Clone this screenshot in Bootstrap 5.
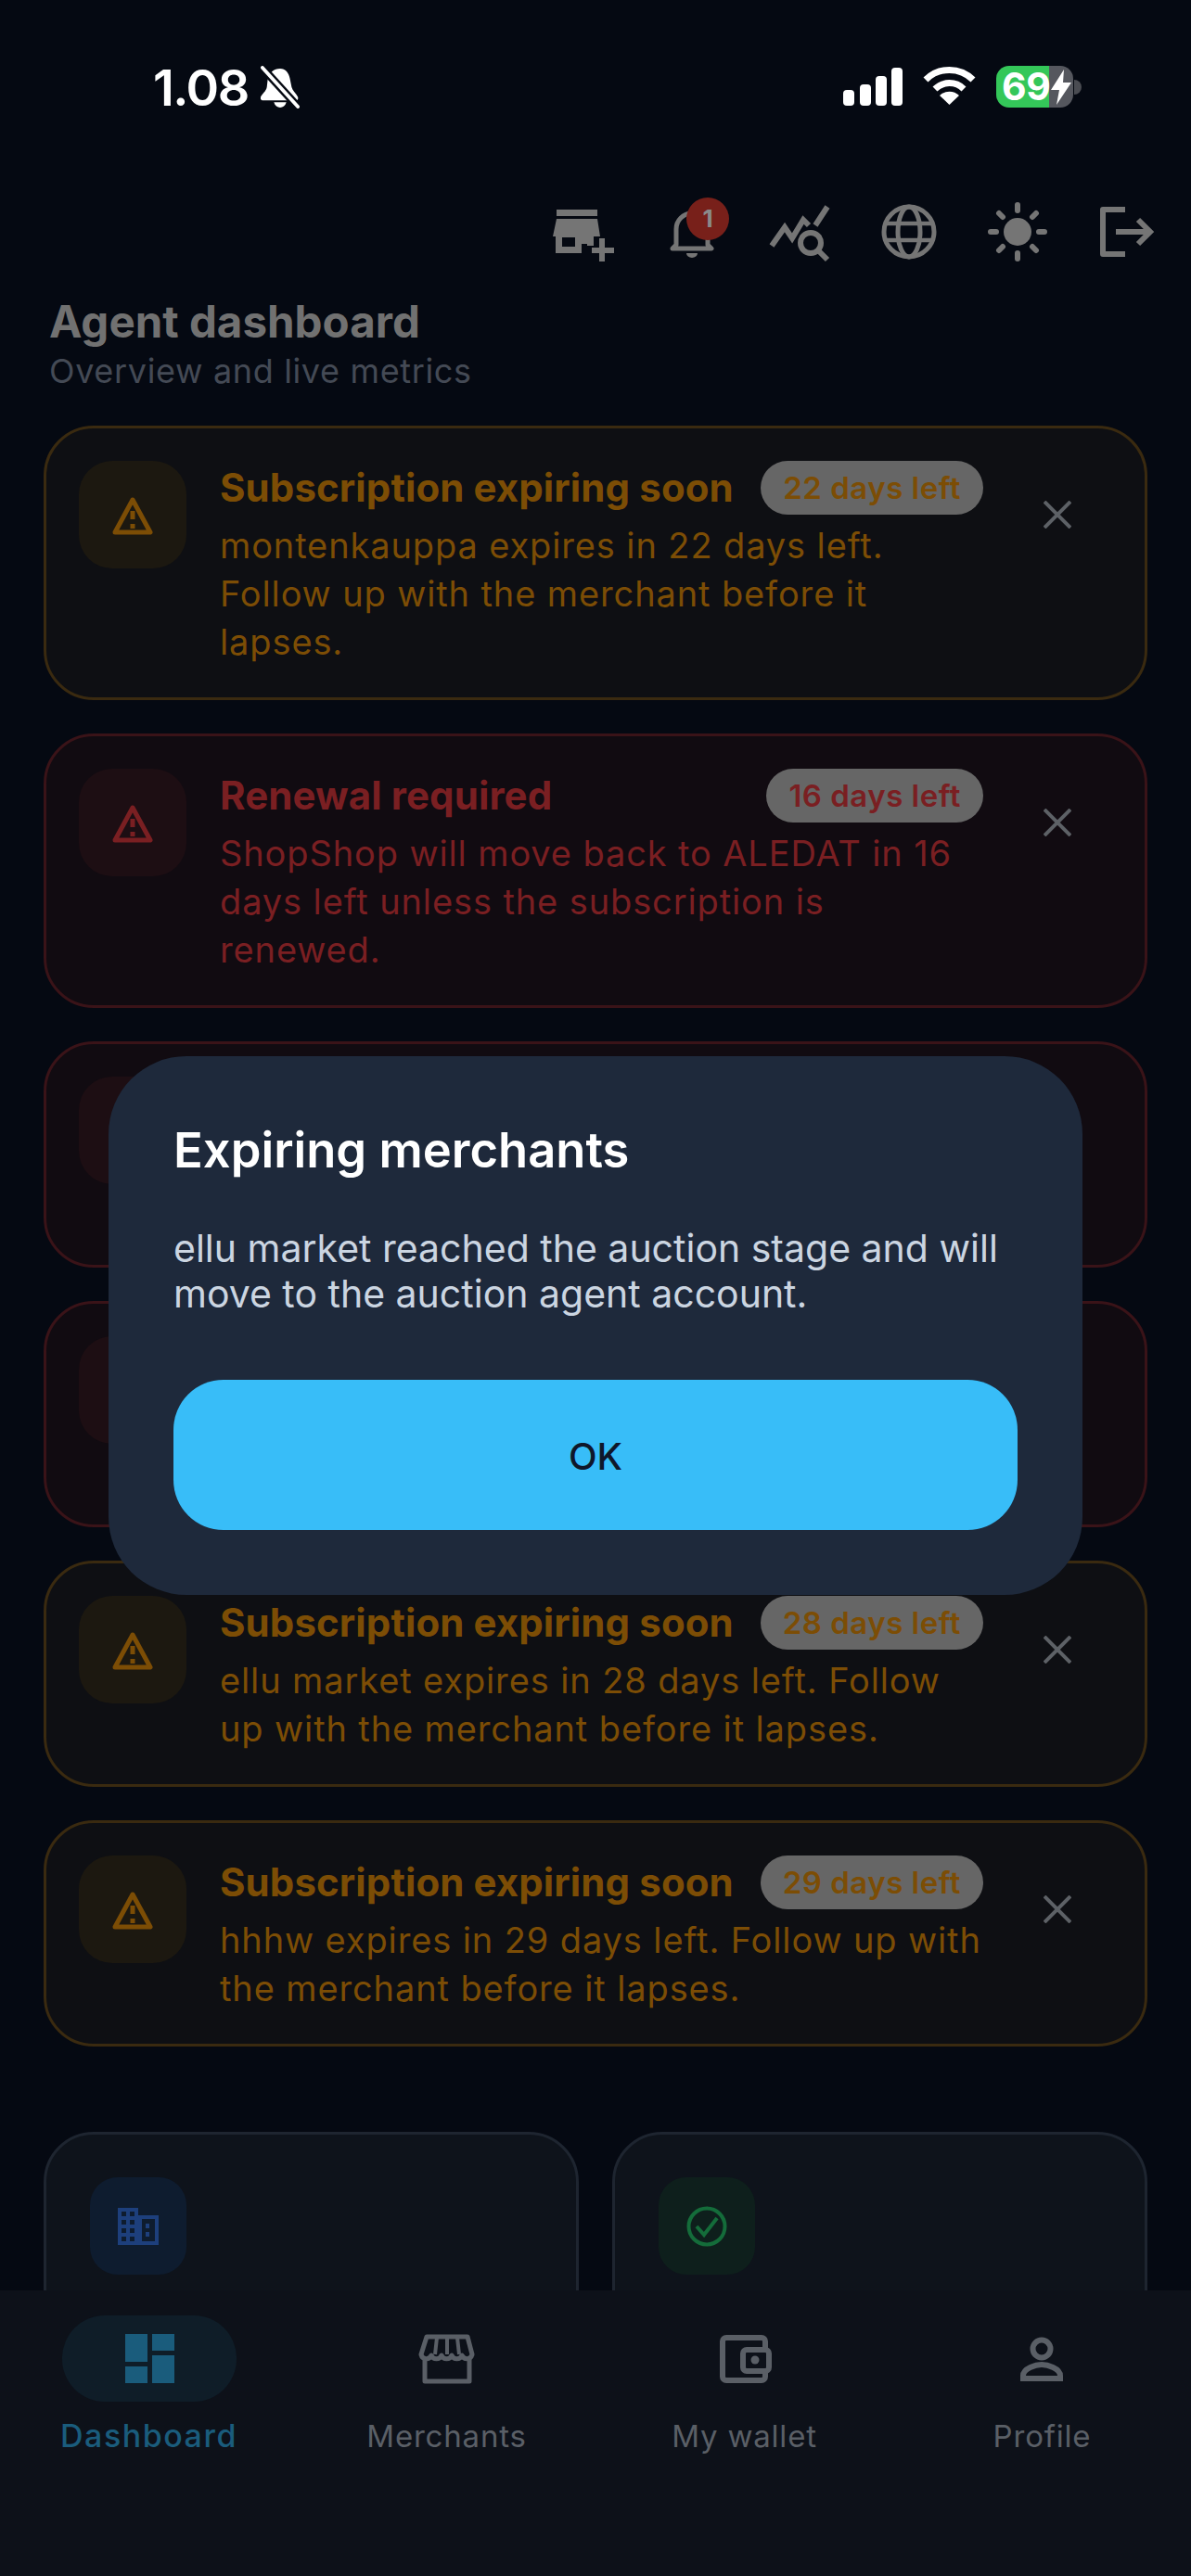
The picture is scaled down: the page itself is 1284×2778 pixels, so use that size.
<!DOCTYPE html>
<html lang="en">
<head>
    <meta charset="UTF-8">
    <meta name="viewport" content="width=device-width, initial-scale=1.0">
    <title>Agent dashboard</title>
    <link href="https://cdn.jsdelivr.net/npm/bootstrap@5.3.0/dist/css/bootstrap.min.css" rel="stylesheet">
    <style>
        html, body { margin: 0; }
        body { width: 1284px; height: 2778px; overflow: hidden; background: #050912; font-family: Inter, "Liberation Sans", sans-serif; position: relative; }

        .status-bar { height: 214px; padding: 71px 118px 0 165px; color: #fff; }
        .status-time { font-size: 54px; line-height: 47px; font-weight: 600; letter-spacing: -1.5px; }
        .status-bell { margin-left: 13px; }
        .status-sig { margin-top: 2px; }
        .status-gap { margin-left: 22px; }
        .batt { width: 83px; height: 45px; border-radius: 14px; background: linear-gradient(90deg, #34c759 57px, #55575e 57px); font-size: 41px; line-height: 45px; font-weight: 700; padding-left: 6px; letter-spacing: -.5px; }
        .batt-nub { width: 8px; height: 16px; border-radius: 0 8px 8px 0; background: #4a4c52; margin: 15px 0 0 1px; }

        .tool-row { gap: 45px; padding-right: 34px; height: 72px; }
        .tool-btn { width: 72px; height: 72px; }
        .tool-btn svg { display: block; overflow: visible; }
        .bell-count { top: -1px; left: 30px; width: 46px; height: 46px; border-radius: 50%; background: #78201a; color: #8a8a8a; font-size: 26px; font-weight: 700; line-height: 46px; text-align: center; }

        .page-head { padding: 33px 53px 0; height: 173px; }
        .page-title { font-size: 47.500px; line-height: 56px; font-weight: 700; color: #717171; margin: 0; }
        .page-sub { font-size: 36px; line-height: 40px; color: #444a55; letter-spacing: .65px; margin: 5px 0 0; }

        .alert-list { padding: 0 47px; gap: 36px; }
        .exp-card { border: 3px solid var(--edge); border-radius: 54px; background: var(--fill); padding: 35px 35px 34px; color: var(--ink); gap: 36px; }
        .exp-amber { --edge: #3a2a10; --fill: #0e0f13; --ink: #7c4d05; --tile: #1c1810; }
        .exp-red { --edge: #3a1318; --fill: #110b11; --ink: #7a1f22; --tile: #1d0e13; }
        .exp-tile { width: 116px; height: 116px; border-radius: 36px; background: var(--tile); flex: none; }
        .exp-body { width: 823px; flex: none; }
        .exp-blank { height: 169px; }
        .exp-title { font-size: 42px; line-height: 58px; font-weight: 700; margin: 0; letter-spacing: .1px; }
        .exp-pill { height: 58px; line-height: 58px; border-radius: 29px; background: #666; font-size: 33px; font-weight: 600; padding: 0 24px; letter-spacing: .5px; }
        .exp-text { font-size: 38px; line-height: 52px; margin: 7px 0 0; letter-spacing: .88px; }
        .exp-close { width: 118px; height: 116px; margin-left: -15px; }

        .stat-row { padding: 92px 47px 0; gap: 36px; }
        .stat-box { width: 577px; height: 300px; border: 3px solid #1e2530; border-radius: 54px; background: #0e131b; padding: 46px 47px; }
        .stat-tile { width: 104px; height: 105px; border-radius: 30px; }
        .tile-blue { background: #0e1c2f; }
        .tile-green { background: #0e1f1c; }

        .tab-bar { height: 308px; background: #0d1119; }
        .tab-item { width: 321px; padding-top: 27px; color: #5a5f66; font-size: 33px; line-height: 42px; letter-spacing: .8px; }
        .tab-icon { width: 188px; height: 93px; border-radius: 46px; margin-bottom: 16px; }
        .tab-active { color: #1a5c7c; font-weight: 500; font-size: 34px; letter-spacing: 1.5px; }
        .tab-active .tab-icon { background: #0f1d28; }

        .dlg.modal { display: block; z-index: 10; }
        .dlg .modal-dialog { max-width: none; width: 1050px; margin: 1139px auto 0; }
        .dlg .modal-content { background: #1e293b; border: 0; border-radius: 84px; padding: 70px; height: 581px; }
        .dlg-title { color: #fff; font-size: 52.500px; line-height: 62px; font-weight: 600; margin: 0; }
        .dlg-text { color: #cbd5e1; font-size: 41px; line-height: 49px; margin: 51px 0 0; }
        .dlg-ok { background: #38bdf8; color: #0f172a; border: 0; border-radius: 54px; height: 164px; width: 910px; margin-top: 68px; padding-top: 9px; font-size: 40px; font-weight: 500; }
    </style>
</head>
<body>
    <div class="status-bar d-flex justify-content-between">
        <div class="d-flex align-items-start">
            <span class="status-time">1.08</span>
            <svg class="status-bell" width="42" height="46" viewBox="0 0 44 48" fill="#fff"><path d="M22 3c6 0 10 5 11 11l2 10c1 4 5 7 7 11 1 3-1 4-3 4H3c-2 0-4-1-3-4 2-4 6-6 7-11l1-9c1-7 7-12 14-12z"/><path d="M15 41h14c-1 4-4 6-7 6s-6-2-7-6z"/><path d="M1 1l41 45" stroke="#050912" stroke-width="9"/><path d="M2 2l40 44" stroke="#fff" stroke-width="4" stroke-linecap="round"/></svg>
        </div>
        <div class="d-flex align-items-start">
            <svg width="64" height="41" viewBox="0 0 64 41" class="status-sig" fill="#fff"><rect y="24" width="12" height="17" rx="4"/><rect x="18" y="18" width="12" height="23" rx="4"/><rect x="35" y="9" width="12" height="32" rx="4"/><rect x="52" width="12" height="41" rx="4"/></svg>
            <svg width="57" height="42" viewBox="0 0 57 42" class="status-gap" fill="none" stroke="#fff" stroke-width="7"><path d="M3 15A36 36 0 0 1 54 15"/><path d="M13 25A22 22 0 0 1 44 25"/><path d="M28.500 42L18 32a15 15 0 0 1 21 0z" fill="#fff" stroke="none"/></svg>
            <div class="batt d-flex status-gap">69<svg width="24" height="38" viewBox="0 0 24 38" class="mt-1" fill="#fff"><path d="M15 0L1 22h9L7 38 23 14h-9z"/></svg></div>
            <div class="batt-nub"></div>
        </div>
    </div>

    <div class="tool-row d-flex justify-content-end">
        <div class="tool-btn"><svg width="72" height="72" fill="#757575"><path d="M7 12h44v7H7zM7 22h44l3 19H3zM6 41h41v10h-7v-2h-6v10H6zM13 42v10h14V42z" fill-rule="evenodd"/><path d="M45 53h24v6H45zM53 43h6v25h-6z"/></svg></div>
        <div class="tool-btn position-relative"><svg width="72" height="72" fill="none" stroke="#757575" stroke-width="5"><path d="M15 54l4-4V33a17 17 0 0 1 34 0v17l4 4z" stroke-linejoin="round"/><path d="M30 59h12a6 5 0 0 1-12 0z" fill="#757575" stroke="none"/></svg><span class="bell-count position-absolute">1</span></div>
        <div class="tool-btn"><svg width="72" height="72" fill="none" stroke="#757575" stroke-width="6"><path d="M5 51L19 31l8 12 12-20 6 6M52 29L65 9"/><circle cx="47" cy="48" r="11"/><path d="M55 56l10 10"/></svg></div>
        <div class="tool-btn"><svg width="72" height="72" fill="none" stroke="#757575" stroke-width="5"><circle cx="36" cy="36" r="27"/><ellipse cx="36" cy="36" rx="12" ry="27"/><path d="M11 27h50M11 45h50" stroke-width="4.500"/></svg></div>
        <div class="tool-btn"><svg width="72" height="72" fill="none" stroke="#757575" stroke-width="6" stroke-linecap="round"><circle cx="36" cy="36" r="15" fill="#757575" stroke="none"/><path d="M36 7v6M36 59v6M7 36h6M59 36h6M16 16l4 4M52 52l4 4M16 56l4-4M52 20l4-4"/></svg></div>
        <div class="tool-btn"><svg width="72" height="72" fill="none" stroke="#757575" stroke-width="6"><path d="M35 12H11v48h24" stroke-linejoin="round"/><path d="M25 36h35M49 23l13 13-13 13"/></svg></div>
    </div>

    <div class="page-head">
        <h1 class="page-title">Agent dashboard</h1>
        <p class="page-sub">Overview and live metrics</p>
    </div>

    <div class="alert-list d-flex flex-column">
        <div class="exp-card exp-amber d-flex">
            <div class="exp-tile d-flex align-items-center justify-content-center"><svg width="54" height="54" fill="none" stroke="currentColor" stroke-width="5" stroke-linejoin="round"><path d="M27 11l19 35H8z"/><path d="M27 23v9M27 37v5"/></svg></div>
            <div class="exp-body">
                <div class="d-flex justify-content-between"><h2 class="exp-title">Subscription expiring soon</h2><span class="exp-pill">22 days left</span></div>
                <p class="exp-text">montenkauppa expires in 22 days left. Follow up with the merchant before it lapses.</p>
            </div>
            <div class="exp-close d-flex align-items-center justify-content-center"><svg width="30" height="30" stroke="#5d6166" stroke-width="4"><path d="M1 1l28 28M29 1L1 29"/></svg></div>
        </div>
        <div class="exp-card exp-red d-flex">
            <div class="exp-tile d-flex align-items-center justify-content-center"><svg width="54" height="54" fill="none" stroke="currentColor" stroke-width="5" stroke-linejoin="round"><path d="M27 11l19 35H8z"/><path d="M27 23v9M27 37v5"/></svg></div>
            <div class="exp-body">
                <div class="d-flex justify-content-between"><h2 class="exp-title">Renewal required</h2><span class="exp-pill">16 days left</span></div>
                <p class="exp-text">ShopShop will move back to ALEDAT in 16 days left unless the subscription is renewed.</p>
            </div>
            <div class="exp-close d-flex align-items-center justify-content-center"><svg width="30" height="30" stroke="#5d6166" stroke-width="4"><path d="M1 1l28 28M29 1L1 29"/></svg></div>
        </div>
        <div class="exp-card exp-red d-flex">
            <div class="exp-tile"></div>
            <div class="exp-body exp-blank"></div>
        </div>
        <div class="exp-card exp-red d-flex">
            <div class="exp-tile"></div>
            <div class="exp-body exp-blank"></div>
        </div>
        <div class="exp-card exp-amber d-flex">
            <div class="exp-tile d-flex align-items-center justify-content-center"><svg width="54" height="54" fill="none" stroke="currentColor" stroke-width="5" stroke-linejoin="round"><path d="M27 11l19 35H8z"/><path d="M27 23v9M27 37v5"/></svg></div>
            <div class="exp-body">
                <div class="d-flex justify-content-between"><h2 class="exp-title">Subscription expiring soon</h2><span class="exp-pill">28 days left</span></div>
                <p class="exp-text">ellu market expires in 28 days left. Follow up with the merchant before it lapses.</p>
            </div>
            <div class="exp-close d-flex align-items-center justify-content-center"><svg width="30" height="30" stroke="#5d6166" stroke-width="4"><path d="M1 1l28 28M29 1L1 29"/></svg></div>
        </div>
        <div class="exp-card exp-amber d-flex">
            <div class="exp-tile d-flex align-items-center justify-content-center"><svg width="54" height="54" fill="none" stroke="currentColor" stroke-width="5" stroke-linejoin="round"><path d="M27 11l19 35H8z"/><path d="M27 23v9M27 37v5"/></svg></div>
            <div class="exp-body">
                <div class="d-flex justify-content-between"><h2 class="exp-title">Subscription expiring soon</h2><span class="exp-pill">29 days left</span></div>
                <p class="exp-text">hhhw expires in 29 days left. Follow up with the merchant before it lapses.</p>
            </div>
            <div class="exp-close d-flex align-items-center justify-content-center"><svg width="30" height="30" stroke="#5d6166" stroke-width="4"><path d="M1 1l28 28M29 1L1 29"/></svg></div>
        </div>
    </div>

    <div class="stat-row d-flex">
        <div class="stat-box">
            <div class="stat-tile tile-blue d-flex align-items-center justify-content-center">
                <svg width="44" height="40" fill="#1d3f7c"><path fill-rule="evenodd" d="M0 0h22v8h22v32H0zM4 4v5h5V4zm9 0v5h5V4zM4 13v5h5v-5zm9 0v5h5v-5zM4 22v5h5v-5zm9 0v5h5v-5zM4 31v5h5v-5zm9 0v5h5v-5zm13-19v24h14V12zm4 5h4v5h-4zm0 9h4v5h-4z"/></svg>
            </div>
        </div>
        <div class="stat-box">
            <div class="stat-tile tile-green d-flex align-items-center justify-content-center">
                <svg width="44" height="44" fill="none" stroke="#146c3a" stroke-width="4"><circle cx="22" cy="22" r="19.500"/><path d="M11 22l8 9 14-18"/></svg>
            </div>
        </div>
    </div>

    <nav class="tab-bar position-absolute bottom-0 start-0 w-100 d-flex">
        <div class="tab-item tab-active d-flex flex-column align-items-center">
            <div class="tab-icon d-flex align-items-center justify-content-center"><svg width="72" height="72" fill="#1a5c7c"><rect x="10" y="9" width="24" height="30"/><rect x="10" y="44" width="24" height="18"/><rect x="39" y="9" width="24" height="18"/><rect x="39" y="32" width="24" height="30"/></svg></div>
            Dashboard
        </div>
        <div class="tab-item d-flex flex-column align-items-center">
            <div class="tab-icon d-flex align-items-center justify-content-center"><svg width="72" height="72" fill="none" stroke="#5a5f66" stroke-width="5" stroke-linejoin="round"><path d="M12 34v26h48V34"/><path d="M14 12h44l5 19c-1 6-9 6-11 1-2 5-9 5-11 0-2 5-9 5-11 0-2 5-9 5-11 0-2 5-10 5-11-1z"/><path d="M25 13l-2 18M36 13v18M47 13l2 18" stroke-width="4"/></svg></div>
            Merchants
        </div>
        <div class="tab-item d-flex flex-column align-items-center">
            <div class="tab-icon d-flex align-items-center justify-content-center"><svg width="72" height="72" fill="none" stroke="#5a5f66" stroke-width="6"><rect x="12" y="13" width="46" height="46" rx="4"/><rect x="34" y="26" width="28" height="23" rx="4" fill="#0d1119"/><circle cx="47" cy="37" r="4.500" fill="#5a5f66" stroke="none"/></svg></div>
            My wallet
        </div>
        <div class="tab-item d-flex flex-column align-items-center">
            <div class="tab-icon d-flex align-items-center justify-content-center"><svg width="72" height="72" fill="none" stroke="#5a5f66" stroke-width="6"><circle cx="35" cy="25" r="9.500"/><path d="M15 57v-3c0-8 14-12 20-12s20 4 20 12v3z"/></svg></div>
            Profile
        </div>
    </nav>

    <div class="dlg modal">
        <div class="modal-dialog">
            <div class="modal-content">
                <h3 class="dlg-title">Expiring merchants</h3>
                <p class="dlg-text">ellu market reached the auction stage and will move to the auction agent account.</p>
                <button type="button" class="btn dlg-ok">OK</button>
            </div>
        </div>
    </div>

    <script src="https://cdn.jsdelivr.net/npm/bootstrap@5.3.0/dist/js/bootstrap.bundle.min.js"></script>
</body>
</html>
